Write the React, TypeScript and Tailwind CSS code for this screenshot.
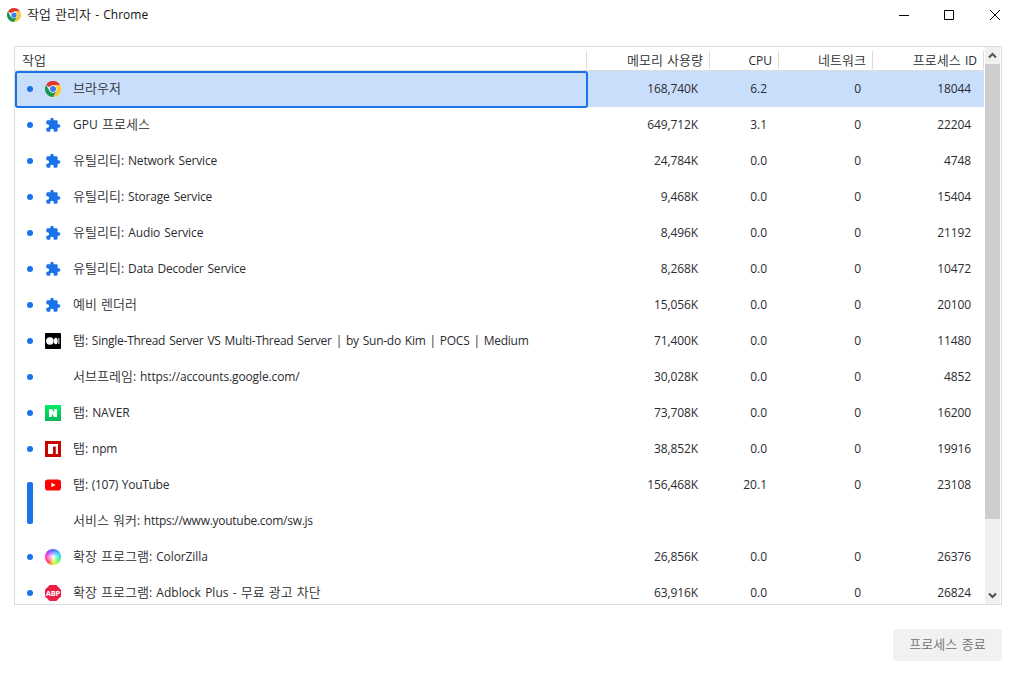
import type { ReactNode } from "react";

type Icon = "chrome" | "puzzle" | "medium" | "naver" | "npm" | "youtube" | "wheel" | "abp" | "none";

interface Task {
  icon: Icon;
  ko: string;
  latin?: string;
  koEnd?: string;
  latinFirst?: string;
  tracking?: string;
  memory?: string;
  cpu?: string;
  network?: string;
  pid?: string;
  group?: "start" | "member";
}

const tasks: Task[] = [
  { icon: "chrome", ko: "브라우저", memory: "168,740K", cpu: "6.2", network: "0", pid: "18044" },
  { icon: "puzzle", latinFirst: "GPU ", ko: "프로세스", memory: "649,712K", cpu: "3.1", network: "0", pid: "22204" },
  { icon: "puzzle", ko: "유틸리티", latin: ": Network Service", memory: "24,784K", cpu: "0.0", network: "0", pid: "4748", tracking: "tracking-[-0.18px]" },
  { icon: "puzzle", ko: "유틸리티", latin: ": Storage Service", memory: "9,468K", cpu: "0.0", network: "0", pid: "15404", tracking: "tracking-[-0.18px]" },
  { icon: "puzzle", ko: "유틸리티", latin: ": Audio Service", memory: "8,496K", cpu: "0.0", network: "0", pid: "21192", tracking: "tracking-[-0.1px]" },
  { icon: "puzzle", ko: "유틸리티", latin: ": Data Decoder Service", memory: "8,268K", cpu: "0.0", network: "0", pid: "10472", tracking: "tracking-[-0.2px]" },
  { icon: "puzzle", ko: "예비 렌더러", memory: "15,056K", cpu: "0.0", network: "0", pid: "20100" },
  { icon: "medium", ko: "탭", latin: ": Single-Thread Server VS Multi-Thread Server | by Sun-do Kim | POCS | Medium", memory: "71,400K", cpu: "0.0", network: "0", pid: "11480", tracking: "tracking-[-0.26px]" },
  { icon: "none", ko: "서브프레임", latin: ": https://accounts.google.com/", memory: "30,028K", cpu: "0.0", network: "0", pid: "4852", tracking: "tracking-[-0.13px]" },
  { icon: "naver", ko: "탭", latin: ": NAVER", memory: "73,708K", cpu: "0.0", network: "0", pid: "16200", tracking: "tracking-[-0.1px]" },
  { icon: "npm", ko: "탭", latin: ": npm", memory: "38,852K", cpu: "0.0", network: "0", pid: "19916", tracking: "tracking-[-0.2px]" },
  { icon: "youtube", ko: "탭", latin: ": (107) YouTube", memory: "156,468K", cpu: "20.1", network: "0", pid: "23108", group: "start", tracking: "tracking-[-0.3px]" },
  { icon: "none", ko: "서비스 워커", latin: ": https://www.youtube.com/sw.js", group: "member", tracking: "tracking-[-0.27px]" },
  { icon: "wheel", ko: "확장 프로그램", latin: ": ColorZilla", memory: "26,856K", cpu: "0.0", network: "0", pid: "26376", tracking: "tracking-[-0.1px]" },
  { icon: "abp", ko: "확장 프로그램", latin: ": Adblock Plus - ", koEnd: "무료 광고 차단", memory: "63,916K", cpu: "0.0", network: "0", pid: "26824" },
];

function Ko({ children }: { children: ReactNode }) {
  return <span className="font-['Noto_Sans_CJK_KR',sans-serif] text-[13px] font-[350] tracking-[0.03px]">{children}</span>;
}

function ChromeLogo({ size }: { size: number }) {
  return (
    <svg width={size} height={size} viewBox="0 0 48 48" className="block">
      <path d="M24 24 3.2 12A24 24 0 0 1 44.8 12H24Z" fill="#e0382c" />
      <path d="M24 12H44.8A24 24 0 0 1 24 48L34.4 30Z" fill="#fcc934" />
      <path d="M3.2 12A24 24 0 0 0 24 48L34.4 30 24 24 13.6 30Z" fill="#1a9850" />
      <circle cx="24" cy="24" r="11" fill="#fff" />
      <circle cx="24" cy="24" r="9" fill="#3b7ded" />
    </svg>
  );
}

function ColorWheel() {
  return (
    <span className="block size-4 rounded-full bg-[radial-gradient(circle,#fff_0%,#ffffff00_65%),conic-gradient(#4060ff,#20d8ff_70deg,#30ff60_120deg,#e8ff20_170deg,#ff4040_220deg,#ff30d0_280deg,#a030ff_320deg,#4060ff)]" />
  );
}

function TaskIcon({ icon }: { icon: Icon }) {
  switch (icon) {
    case "chrome":
      return <ChromeLogo size={16} />;
    case "puzzle":
      return (
        <svg width="16" height="16" viewBox="0 0 24 24" className="block" fill="#1a73e8">
          <path d="M20.5 11H19V7c0-1.1-.9-2-2-2h-4V3.500a2.500 2.500 0 0 0-5 0V5H4c-1.100 0-1.990.9-1.990 2v3.800H3.500c1.490 0 2.700 1.210 2.700 2.700s-1.210 2.700-2.700 2.700H2V20c0 1.100.9 2 2 2h3.800v-1.500c0-1.490 1.210-2.700 2.700-2.700s2.700 1.210 2.700 2.700V22H17c1.100 0 2-.9 2-2v-4h1.500a2.500 2.500 0 0 0 0-5z" />
        </svg>
      );
    case "medium":
      return (
        <svg width="16" height="16" viewBox="0 0 16 16" className="block">
          <rect width="16" height="16" rx="1" fill="#000" />
          <circle cx="4.900" cy="8" r="3.800" fill="#fff" />
          <ellipse cx="10.800" cy="8" rx="1.800" ry="3.300" fill="#fff" />
          <rect x="13.300" y="5" width="1.100" height="6" rx=".5" fill="#ddd" />
        </svg>
      );
    case "naver":
      return (
        <svg width="16" height="16" viewBox="0 0 16 16" className="block">
          <defs>
            <linearGradient id="naver" x1="0" y1="0" x2="0" y2="1">
              <stop stopColor="#02ed61" />
              <stop offset="1" stopColor="#05b65b" />
            </linearGradient>
          </defs>
          <rect width="16" height="16" fill="url(#naver)" />
          <path d="M4 4h3l2.200 3.500V4H12v8H9L6.800 8.500V12H4Z" fill="#fff" />
        </svg>
      );
    case "npm":
      return (
        <svg width="16" height="16" viewBox="0 0 16 16" className="block">
          <path d="M0 0h16v16H0Z" fill="#cb0000" />
          <path d="M3 3h10v10h-2.200V5.400H8V13H3Z" fill="#fff" />
        </svg>
      );
    case "youtube":
      return (
        <svg width="16" height="16" viewBox="0 0 16 16" className="block">
          <rect y="2.400" width="16" height="11.200" rx="2.800" fill="#f00" />
          <path d="m6.400 5.700 4.200 2.300-4.200 2.300Z" fill="#fff" />
        </svg>
      );
    case "wheel":
      return <ColorWheel />;
    case "abp":
      return (
        <svg width="16" height="16" viewBox="0 0 16 16" className="block">
          <path d="M4.700 0h6.600L16 4.700v6.600L11.300 16H4.700L0 11.300V4.700Z" fill="#ed1e45" />
          <text x="8" y="10.800" textAnchor="middle" textLength="14.400" className="fill-white font-['Open_Sans',sans-serif] text-[7.5px] font-bold [word-spacing:0px]">ABP</text>
        </svg>
      );
    default:
      return null;
  }
}

const COLUMNS = "grid grid-cols-[572px_123px_69px_94px_111px]";

function HeaderCell({ children, end = true }: { children: ReactNode; end?: boolean }) {
  return (
    <div className={end ? "flex items-center justify-end border-r border-[#dcdcdc] pr-1.5" : "flex items-center border-r border-[#dcdcdc] pl-[7px]"}>
      <span className="whitespace-pre pt-px leading-4">{children}</span>
    </div>
  );
}

function TaskRow({ task, selected }: { task: Task; selected: boolean }) {
  return (
    <div className={selected ? `${COLUMNS} h-9 w-[969px] shrink-0 bg-[#c9defb]` : `${COLUMNS} h-9 w-[969px] shrink-0`}>
      <div
        className={
          selected
            ? "relative -mr-px -mb-px flex items-center rounded-[3px] bg-[#c9defb] pb-px pl-3 inset-ring-2 inset-ring-[#1a73e8]"
            : "relative flex items-center pl-3"
        }
      >
        {task.group === "start" && <span className="absolute top-[15px] left-3 h-[42px] w-1.5 rounded-[2px] bg-[#1a73e8]" />}
        {task.group ? <span className="w-1.5" /> : <span className="size-1.5 rounded-full bg-[#1a73e8]" />}
        <span className="ml-3 size-4">
          <TaskIcon icon={task.icon} />
        </span>
        <span className="ml-3 whitespace-pre pb-px leading-4">
          {task.latinFirst}
          <Ko>{task.ko}</Ko>
          {task.latin && <span className={task.tracking}>{task.latin}</span>}
          {task.koEnd && <Ko>{task.koEnd}</Ko>}
        </span>
      </div>
      <span className="pr-3 text-right leading-9 tracking-[-0.1px]">{task.memory}</span>
      <span className="pr-3 text-right leading-9">{task.cpu}</span>
      <span className="pr-3 text-right leading-9">{task.network}</span>
      <span className="pr-[13px] text-right leading-9 tracking-[-0.1px]">{task.pid}</span>
    </div>
  );
}

function Scrollbar() {
  return (
    <div className="mr-px flex w-[15px] flex-col bg-[#f0f0f0]">
      <div className="flex h-[17px] items-center justify-center">
        <svg width="9" height="7" viewBox="0 0 9 7" fill="none" stroke="#505050" strokeWidth="2">
          <path d="m1 5.500 3.500-3.500L8 5.500" />
        </svg>
      </div>
      <div className="h-[455px] bg-[#cdcdcd]" />
      <div className="flex-1" />
      <div className="flex h-[17px] items-center justify-center">
        <svg width="9" height="7" viewBox="0 0 9 7" fill="none" stroke="#505050" strokeWidth="2">
          <path d="m1 1.500 3.500 3.500L8 1.500" />
        </svg>
      </div>
    </div>
  );
}

export default function App() {
  return (
    <div className="flex h-[674px] w-[1016px] flex-col overflow-hidden bg-white font-['Open_Sans','Noto_Sans_CJK_KR',sans-serif] text-[12px] text-[#2b2c30] [word-spacing:1.1px]">
      <header className="flex h-[29px] items-center pl-[7px] text-[#111]">
        <ChromeLogo size={14} />
        <span className="ml-1.5 whitespace-pre leading-4">
          <Ko>작업 관리자</Ko> - Chrome
        </span>
        <svg width="102" height="12" viewBox="0 0 102 12" className="mr-[15px] ml-auto" fill="none" stroke="#000">
          <path d="M0 6.500h10M45.500 1.500h9v9h-9ZM91 1l10 10M101 1 91 11" />
        </svg>
      </header>

      <main className="mx-[14px] mt-[17px] flex h-[559px] border border-[#dcdcdc]">
        <div className="flex w-[970px] flex-col overflow-hidden">
          <div className={`${COLUMNS} h-6 w-[969px] shrink-0 border-b border-[#dcdcdc] pt-1 pb-0.5`}>
            <HeaderCell end={false}><Ko>작업</Ko></HeaderCell>
            <HeaderCell><Ko>메모리 사용량</Ko></HeaderCell>
            <HeaderCell>CPU</HeaderCell>
            <HeaderCell><Ko>네트워크</Ko></HeaderCell>
            <HeaderCell><Ko>프로세스</Ko> ID</HeaderCell>
          </div>
          {tasks.map((task, i) => (
            <TaskRow key={task.ko + (task.latin ?? "")} task={task} selected={i === 0} />
          ))}
        </div>
        <Scrollbar />
      </main>

      <footer className="mt-6 mr-[14px] flex justify-end">
        <button className="h-8 w-[109px] rounded-[3px] bg-[#f1f1f1] pb-0.5 text-[#6f6f6f] [word-spacing:1.5px]" disabled>
          <Ko>프로세스 종료</Ko>
        </button>
      </footer>
    </div>
  );
}
